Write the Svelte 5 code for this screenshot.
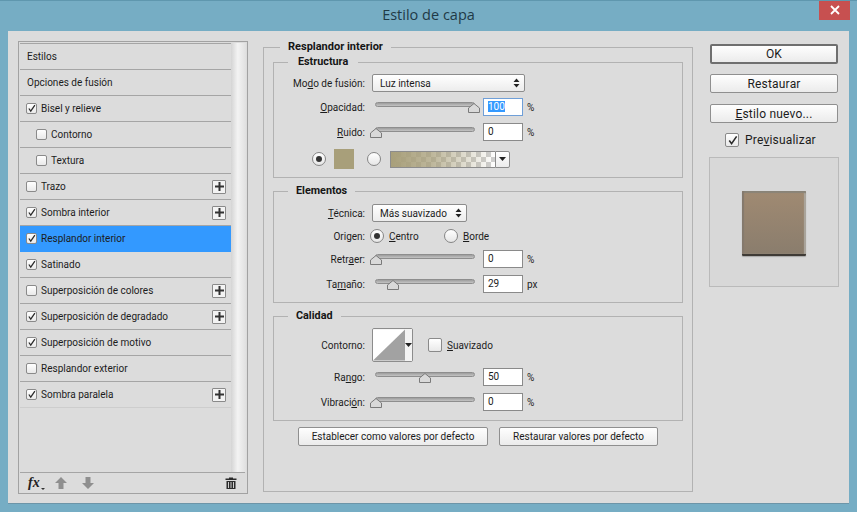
<script lang="ts">
  interface StyleRow {
    label: string;
    checked?: boolean;
    hasBox?: boolean;
    indent?: boolean;
    plus?: boolean;
    active?: boolean;
  }

  const rows: StyleRow[] = [
    { label: 'Estilos' },
    { label: 'Opciones de fusión' },
    { label: 'Bisel y relieve', hasBox: true, checked: true },
    { label: 'Contorno', hasBox: true, indent: true },
    { label: 'Textura', hasBox: true, indent: true },
    { label: 'Trazo', hasBox: true, plus: true },
    { label: 'Sombra interior', hasBox: true, checked: true, plus: true },
    { label: 'Resplandor interior', hasBox: true, checked: true, active: true },
    { label: 'Satinado', hasBox: true, checked: true },
    { label: 'Superposición de colores', hasBox: true, plus: true },
    { label: 'Superposición de degradado', hasBox: true, checked: true, plus: true },
    { label: 'Superposición de motivo', hasBox: true, checked: true },
    { label: 'Resplandor exterior', hasBox: true },
    { label: 'Sombra paralela', hasBox: true, checked: true, plus: true }
  ];
</script>

{#snippet checkbox(checked?: boolean)}
  <span class="check">
    {#if checked}
      <svg viewBox="0 0 12 12" width="11" height="11">
        <path d="M2.5 6 L5 9.5 L10.5 1.5" fill="none" stroke="#2a2a2a" stroke-width="1.7" />
      </svg>
    {/if}
  </span>
{/snippet}

{#snippet caret()}
  <svg viewBox="0 0 7 4" width="7" height="4"><path d="M0 0 H7 L3.5 4 Z" fill="#222" /></svg>
{/snippet}

{#snippet updown()}
  <svg class="updown" viewBox="0 0 7 10" width="7" height="10">
    <path d="M0.5 4 L3.5 0.5 L6.5 4 Z M0.5 6 L3.5 9.5 L6.5 6 Z" fill="#222" />
  </svg>
{/snippet}

{#snippet slider(pos: number)}
  <div class="slider">
    <div class="track"></div>
    <svg class="thumb" style="left: {pos * 0.98 - 5.5}px" viewBox="0 0 12 10" width="12" height="10">
      <path d="M6 0.5 L11.5 5 V9.5 H0.5 V5 Z" fill="#d9d9d9" stroke="#7a7a7a" stroke-linejoin="round" />
    </svg>
  </div>
{/snippet}

{#snippet sliderRow(label: any, pos: number, value: string, unit: string, gap: string, selected = false)}
  <div class="row {gap}">
    <span class="label">{@render label()}</span>
    {@render slider(pos)}
    <div class="field" class:focused={selected}>
      {#if selected}<span class="selected">{value}</span>{:else}{value}{/if}
    </div>
    <span class="unit">{unit}</span>
  </div>
{/snippet}

{#snippet lblOpacidad()}<u>O</u>pacidad:{/snippet}
{#snippet lblRuido()}<u>R</u>uido:{/snippet}
{#snippet lblRetraer()}Retr<u>a</u>er:{/snippet}
{#snippet lblTamano()}Ta<u>m</u>año:{/snippet}
{#snippet lblRango()}Ra<u>n</u>go:{/snippet}
{#snippet lblVibracion()}Vibraci<u>ó</u>n:{/snippet}

<div class="frame">
  <header class="titlebar">
    <span class="title">Estilo de capa</span>
    <div class="close">
      <svg viewBox="0 0 10 10" width="10" height="10">
        <path d="M1 1 L9 9 M9 1 L1 9" stroke="#fff" stroke-width="1.8" />
      </svg>
    </div>
  </header>

  <div class="dialog">
    <aside class="panel">
      <div class="panel-body">
        <ul class="list">
          {#each rows as row}
            <li class="item" class:active={row.active} class:indent={row.indent} class:plain={!row.hasBox}>
              {#if row.hasBox}{@render checkbox(row.checked)}{/if}
              <span class="item-label">{row.label}</span>
              {#if row.plus}
                <span class="plus">
                  <svg viewBox="0 0 9 9" width="9" height="9">
                    <path d="M4.5 0 V9 M0 4.5 H9" stroke="#333" stroke-width="2" />
                  </svg>
                </span>
              {/if}
            </li>
          {/each}
        </ul>
        <div class="strip"></div>
      </div>
      <div class="toolbar">
        <span class="fx">fx</span>
        <svg class="fx-caret" viewBox="0 0 4 2" width="4" height="2"><path d="M0 0 H4 L2 2 Z" fill="#333" /></svg>
        <svg class="arrow up" viewBox="0 0 12 12" width="12" height="12">
          <path d="M6 0 L12 6 H8.5 V12 H3.5 V6 H0 Z" fill="#8f8f8f" />
        </svg>
        <svg class="arrow down" viewBox="0 0 12 12" width="12" height="12">
          <path d="M3.5 0 H8.5 V6 H12 L6 12 L0 6 H3.5 Z" fill="#8f8f8f" />
        </svg>
        <svg class="trash" viewBox="0 0 12 12" width="12" height="12">
          <path d="M4 0.5 H8 V1.5 H11.5 V3 H0.5 V1.5 H4 Z" fill="#2b2b2b" />
          <path d="M1.5 4 H10.5 V12 H1.5 Z" fill="#2b2b2b" />
          <path d="M3.5 5 V11 M6 5 V11 M8.5 5 V11" stroke="#cfcfcf" />
        </svg>
      </div>
    </aside>

    <main class="middle">
      <fieldset class="outer">
        <legend class="legend-outer">Resplandor interior</legend>

        <fieldset class="group structure">
          <legend class="legend-struct">Estructura</legend>
          <div class="row">
            <span class="label">Mo<u>d</u>o de fusión:</span>
            <div class="select wide">Luz intensa {@render updown()}</div>
          </div>
          {@render sliderRow(lblOpacidad, 100, '100', '%', 'gap6', true)}
          {@render sliderRow(lblRuido, 0, '0', '%', 'gap7')}
          <div class="row gap9 color-row">
            <span class="radio on"></span>
            <span class="color-swatch"></span>
            <span class="radio second"></span>
            <div class="gradient">
              <div class="gradient-fill"></div>
              <div class="gradient-btn">{@render caret()}</div>
            </div>
          </div>
        </fieldset>

        <fieldset class="group elements">
          <legend class="legend-group">Elementos</legend>
          <div class="row">
            <span class="label"><u>T</u>écnica:</span>
            <div class="select narrow">Más suavizado {@render updown()}</div>
          </div>
          <div class="row gap5">
            <span class="label">Origen:</span>
            <span class="radio on first"></span>
            <span class="radio-label"><u>C</u>entro</span>
            <span class="radio borde"></span>
            <span class="radio-label"><u>B</u>orde</span>
          </div>
          {@render sliderRow(lblRetraer, 0, '0', '%', 'gap5')}
          {@render sliderRow(lblTamano, 17.5, '29', 'px', 'gap7')}
        </fieldset>

        <fieldset class="group quality">
          <legend class="legend-group">Calidad</legend>
          <div class="row contour-row">
            <span class="label">Contorno:</span>
            <div class="contour">
              <svg viewBox="0 0 33 32" width="33" height="32">
                <rect width="33" height="32" fill="#fff" />
                <path d="M0 32 L33 0 V32 Z" fill="#a2a2a2" />
              </svg>
              <div class="contour-btn">{@render caret()}</div>
            </div>
            <span class="smooth">{@render checkbox(false)}<span><u>S</u>uavizado</span></span>
          </div>
          {@render sliderRow(lblRango, 50, '50', '%', 'gap6')}
          {@render sliderRow(lblVibracion, 0, '0', '%', 'gap7')}
        </fieldset>

        <div class="actions">
          <button class="btn set-default">Establecer como valores por defecto</button>
          <button class="btn reset-default">Restaurar valores por defecto</button>
        </div>
      </fieldset>
    </main>

    <section class="side">
      <button class="btn side-btn ok">OK</button>
      <button class="btn side-btn">Restaurar</button>
      <button class="btn side-btn"><u>E</u>stilo nuevo...</button>
      <div class="preview-check">{@render checkbox(true)}<span>Pre<u>v</u>isualizar</span></div>
      <div class="preview">
        <div class="preview-swatch"></div>
      </div>
    </section>
  </div>
</div>

<style>
  :global(body) {
    margin: 0;
  }

  .frame {
    width: 857px;
    height: 512px;
    box-sizing: border-box;
    background: #76adc4;
    border-top: 1px solid #5f97ae;
    display: flex;
    flex-direction: column;
    font-family: Roboto, 'Liberation Sans', sans-serif;
    font-size: 10px;
    color: #1c1c1c;
    overflow: hidden;
  }

  .titlebar {
    position: relative;
    height: 30px;
    box-sizing: border-box;
    padding-bottom: 3px;
    display: flex;
    align-items: center;
    justify-content: center;
    flex: none;
  }

  .title {
    font-family: 'Open Sans', sans-serif;
    font-size: 14.5px;
    color: #1f3a47;
  }

  .close {
    position: absolute;
    top: -1px;
    right: 7px;
    width: 31px;
    height: 20px;
    background: #c75050;
    display: flex;
    align-items: center;
    justify-content: center;
  }

  .dialog {
    margin: 0 8px;
    height: 473px;
    box-sizing: border-box;
    background: #dcdcdc;
    display: flex;
    align-items: flex-start;
    border-bottom: 1px solid #6d95a8;
  }

  u {
    text-underline-offset: 1px;
  }

  /* left list */
  .panel {
    width: 230px;
    height: 453px;
    margin: 10px 0 0 10px;
    box-sizing: border-box;
    border: 1px solid #a2a2a2;
    padding: 1px 1px 0;
    display: flex;
    flex-direction: column;
  }

  .panel-body {
    flex: 1;
    display: flex;
    min-height: 0;
  }

  .list {
    list-style: none;
    margin: 0;
    padding: 0;
    width: 211px;
    border-top: 1px solid #a5a5a5;
    flex: none;
  }

  .item {
    height: 26px;
    box-sizing: border-box;
    border-bottom: 1px solid #a5a5a5;
    display: flex;
    align-items: center;
    padding: 0 5px 0 6px;
    gap: 4px;
  }

  .item:last-child {
    border-bottom-color: #cdcdcd;
  }

  .item.plain {
    padding-left: 7px;
  }

  .item.indent {
    padding-left: 16px;
  }

  .item.active {
    background: #3399ff;
    border-bottom-color: #3399ff;
  }

  .item-label {
    flex: 1;
    line-height: 14px;
  }

  .check {
    width: 11px;
    height: 11px;
    box-sizing: border-box;
    flex: none;
    border: 1px solid #8a8a8a;
    border-radius: 2px;
    background: linear-gradient(#fff, #e9e9e9);
    display: inline-flex;
    align-items: center;
    justify-content: center;
  }

  .plus {
    width: 12px;
    height: 12px;
    border: 1px solid #8a8a8a;
    border-radius: 1px;
    background: #f3f3f3;
    display: flex;
    align-items: center;
    justify-content: center;
  }

  .strip {
    flex: 1;
    background: linear-gradient(90deg, #d4d4d4, #f3f3f3 45%, #e0e0e0);
  }

  .toolbar {
    height: 21px;
    flex: none;
    box-sizing: border-box;
    border-top: 1px solid #a5a5a5;
    display: flex;
    align-items: center;
    padding-left: 8px;
    margin-right: 1px;
  }

  .fx {
    font-family: 'Liberation Serif', serif;
    font-style: italic;
    font-weight: bold;
    font-size: 14px;
    line-height: 16px;
    color: #222;
    width: 13px;
  }

  .fx-caret {
    margin-top: 12px;
  }

  .arrow.up {
    margin-left: 10px;
  }

  .arrow.down {
    margin-left: 15px;
  }

  .trash {
    margin-left: 131px;
  }

  /* middle column */
  .middle {
    width: 430px;
    height: 452px;
    margin: 9px 0 0 15px;
  }

  fieldset {
    margin: 0;
    min-width: 0;
    box-sizing: border-box;
  }

  legend {
    font-weight: bold;
    font-size: 10.8px;
    line-height: 14px;
    height: 14px;
    color: #151515;
  }

  .outer {
    height: 100%;
    border: 1px solid #b2b2b2;
    padding: 1px 9px 0;
  }

  .legend-outer {
    margin-left: 7px;
    padding: 0 8px;
    font-size: 11px;
  }

  .group {
    border: 1px solid #b2b2b2;
    padding: 0 0 9px;
  }

  .legend-struct {
    margin-left: 14px;
    padding: 0 10px;
  }

  .legend-group {
    margin-left: 14px;
    padding: 0 8px;
  }

  .structure {
    padding-top: 5px;
  }

  .elements {
    margin-top: 6px;
    padding-top: 6px;
  }

  .quality {
    margin-top: 6px;
    padding-top: 5px;
  }

  .row {
    display: flex;
    align-items: center;
    height: 18px;
  }

  .gap5 {
    margin-top: 5px;
  }

  .gap6 {
    margin-top: 6px;
  }

  .gap7 {
    margin-top: 7px;
  }

  .gap9 {
    margin-top: 9px;
  }

  .label {
    width: 91px;
    margin-right: 7px;
    text-align: right;
    flex: none;
  }

  .select {
    height: 18px;
    box-sizing: border-box;
    border: 1px solid #8c8c8c;
    border-radius: 2px;
    background: linear-gradient(#fff, #ececec);
    display: flex;
    align-items: center;
    justify-content: space-between;
    padding: 0 4px 0 7px;
  }

  .wide {
    width: 153px;
  }

  .narrow {
    width: 95px;
  }

  .slider {
    position: relative;
    width: 100px;
    height: 18px;
    margin-left: 3px;
    flex: none;
  }

  .track {
    width: 100px;
    height: 5px;
    margin-top: 4px;
    box-sizing: border-box;
    border: 1px solid #8e8e8e;
    border-radius: 3px;
    background: linear-gradient(#9d9d9d, #c4c4c4);
  }

  .thumb {
    position: absolute;
    top: 5px;
  }

  .field {
    width: 40px;
    height: 18px;
    margin-left: 8px;
    box-sizing: border-box;
    border: 1px solid #8a8a8a;
    background: #fff;
    padding-left: 4px;
    line-height: 16px;
    flex: none;
  }

  .field.focused {
    border-color: #6f9fd8;
  }

  .selected {
    background: #3399ff;
    color: #fff;
  }

  .unit {
    margin-left: 4px;
  }

  .radio {
    width: 14px;
    height: 14px;
    box-sizing: border-box;
    border: 1px solid #858585;
    border-radius: 50%;
    background: linear-gradient(#fff, #e6e6e6);
    flex: none;
    position: relative;
  }

  .radio.on::after {
    content: '';
    position: absolute;
    inset: 3px;
    border-radius: 50%;
    background: #333;
  }

  .color-row {
    padding-left: 38px;
  }

  .color-swatch {
    width: 20px;
    height: 20px;
    margin-left: 8px;
    background: #a89f7a;
    flex: none;
  }

  .radio.second {
    margin-left: 13px;
  }

  .gradient {
    margin-left: 9px;
    width: 120px;
    height: 17px;
    display: flex;
  }

  .gradient-fill {
    width: 105px;
    background:
      linear-gradient(90deg, #a89f7a, rgba(168, 159, 122, 0.75) 40%, rgba(168, 159, 122, 0)),
      repeating-conic-gradient(#cfcfcf 0 25%, #fff 0 50%) 0 0 / 10px 10px;
    border: 1px solid #8c8c8c;
    border-right: 0;
    box-sizing: border-box;
  }

  .gradient-btn {
    width: 15px;
    box-sizing: border-box;
    border: 1px solid #8c8c8c;
    border-radius: 0 2px 2px 0;
    background: linear-gradient(#fff, #ececec);
    display: flex;
    align-items: center;
    justify-content: center;
  }

  .first {
    margin-left: -2px;
  }

  .radio-label {
    margin-left: 5px;
    width: 55px;
  }

  .radio.borde {
    margin-left: 0;
  }

  .contour-row {
    height: 34px;
  }

  .contour {
    width: 41px;
    height: 34px;
    box-sizing: border-box;
    border: 1px solid #8c8c8c;
    border-radius: 2px;
    display: flex;
    background: #ececec;
    flex: none;
  }

  .contour-btn {
    flex: 1;
    display: flex;
    align-items: center;
    justify-content: center;
    background: #f3f3f3;
  }

  .smooth {
    margin-left: 15px;
    display: flex;
    align-items: center;
    gap: 5px;
  }

  .smooth :global(.check),
  .preview-check :global(.check) {
    width: 14px;
    height: 14px;
  }

  .actions {
    display: flex;
    gap: 11px;
    margin: 6px 0 0 25px;
  }

  .btn {
    height: 19px;
    padding: 0;
    box-sizing: border-box;
    border: 1px solid #8f8f8f;
    border-radius: 2px;
    background: linear-gradient(#fefefe, #ebebeb);
    font: inherit;
    color: inherit;
  }

  .set-default {
    width: 190px;
  }

  .reset-default {
    width: 159px;
  }

  /* right column */
  .side {
    width: 130px;
    margin: 13px 0 0 16px;
    display: flex;
    flex-direction: column;
    align-items: flex-end;
  }

  .side-btn {
    width: 128px;
    margin: 0 1px 11px 0;
    font-size: 12px;
    letter-spacing: 0.2px;
  }

  .ok {
    height: 20px;
    margin-bottom: 10px;
    border: 2px solid #6f6f6f;
  }

  .preview-check {
    align-self: flex-start;
    margin: -3px 0 0 16px;
    height: 18px;
    display: flex;
    align-items: center;
    gap: 6px;
    font-size: 12px;
    letter-spacing: 0.2px;
  }

  .preview {
    width: 130px;
    height: 130px;
    margin-top: 8px;
    box-sizing: border-box;
    border: 1px solid #bababa;
    background: #d8d8d8;
    display: flex;
    align-items: center;
    justify-content: center;
  }

  .preview-swatch {
    width: 64px;
    height: 65px;
    margin-top: 2px;
    box-sizing: border-box;
    border-radius: 1px;
    background: linear-gradient(#a08a72, #8a7d6d);
    border-bottom: 2px solid #3f3b36;
    box-shadow:
      inset 2px 0 1px #84796d,
      inset 0 2px 1px #8a8478,
      inset -2px 0 1px #aca89f,
      0 1px 1px rgba(80, 80, 80, 0.35);
  }
</style>
